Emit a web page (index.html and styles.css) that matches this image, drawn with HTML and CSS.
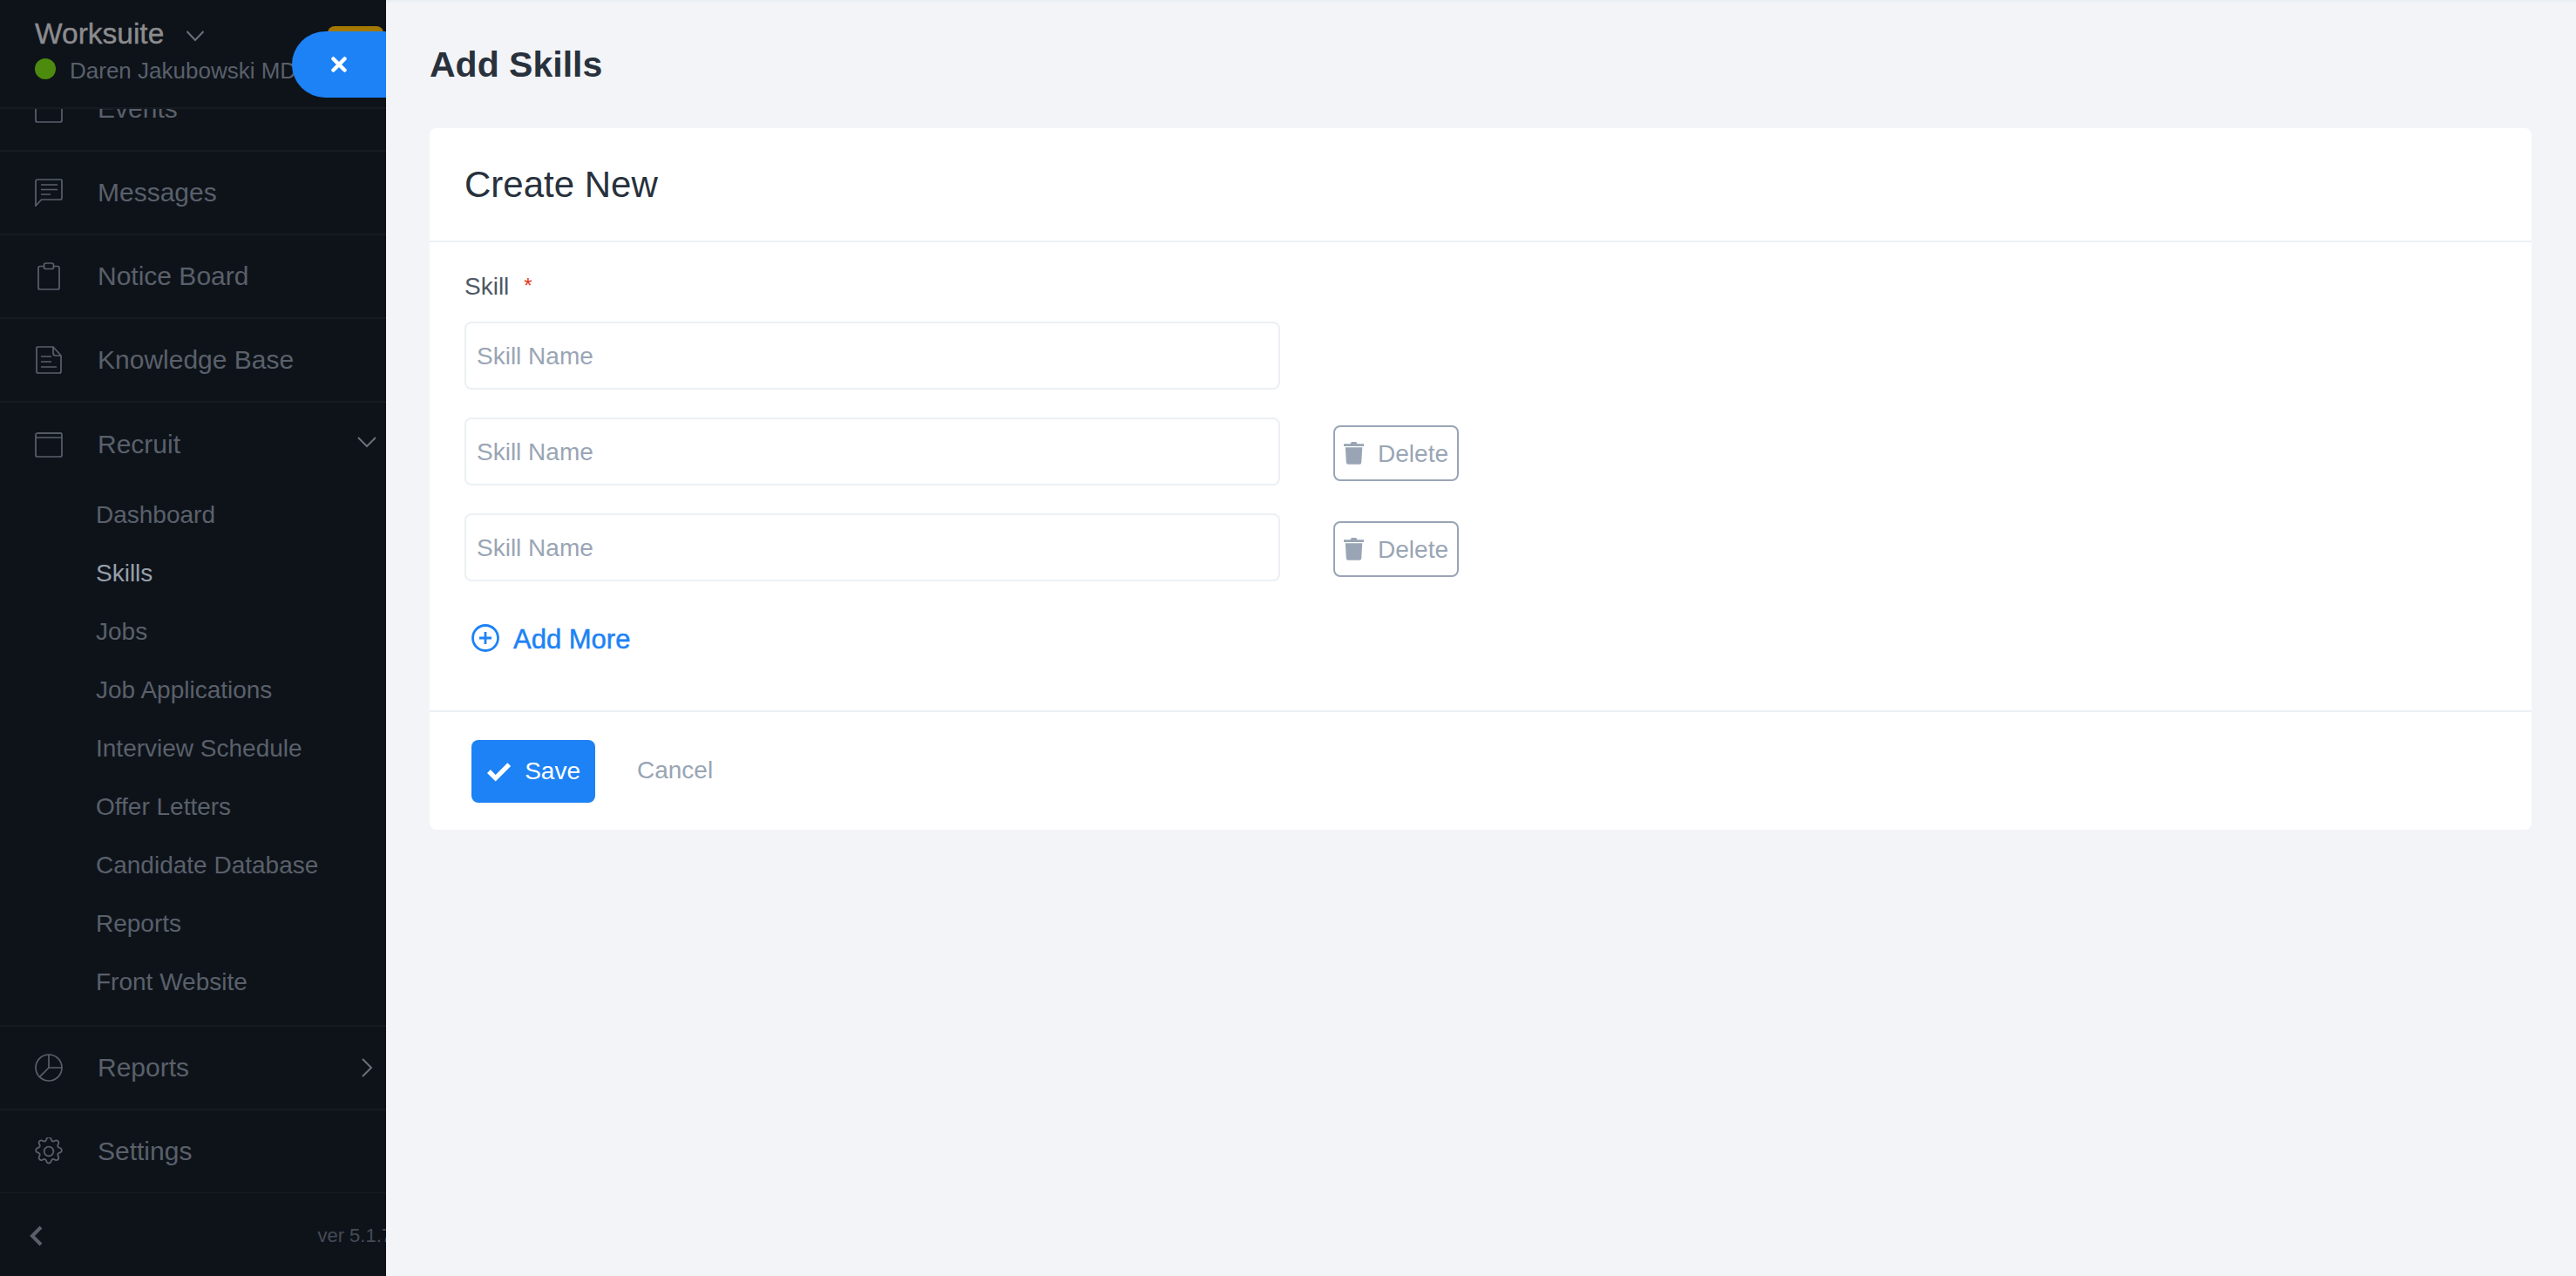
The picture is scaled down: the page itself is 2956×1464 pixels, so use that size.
FILE: index.html
```html
<!DOCTYPE html>
<html lang="en">
<head>
<meta charset="utf-8">
<title>Add Skills</title>
<link rel="stylesheet" href="styles.css">
</head>
<body>
<div class="app">
  <aside class="sidebar">
    <header class="brand">
      <div class="brand-name"><span>Worksuite</span>
        <svg class="brand-caret" viewBox="0 0 22 14"><path d="M1.500 2 11 12 20.500 2"/></svg>
      </div>
      <div class="brand-user"><i class="dot"></i><span>Daren Jakubowski MD</span></div>
    </header>
    <span class="badge"></span>
    <button class="close" aria-label="Close"><svg viewBox="0 0 18 18"><path d="M2.500 2.500 15.500 15.500M15.500 2.500 2.500 15.500"/></svg></button>
    <nav class="nav">
      <div class="nav-inner">
        <a class="row">
          <svg class="ico" viewBox="0 0 32 32"><rect x="1" y="3" width="30" height="28" rx="2"/></svg>
          <span>Events</span>
        </a>
        <a class="row">
          <svg class="ico" viewBox="0 0 32 32"><path d="M1 31V3a2 2 0 0 1 2-2h27a1 1 0 0 1 1 1v20a2 2 0 0 1-2 2H7.500Z"/><path d="M7 7h19M7 12.500h19M7 18h11"/></svg>
          <span>Messages</span>
        </a>
        <a class="row">
          <svg class="ico" viewBox="0 0 32 32"><path d="M10 4.500H6a2 2 0 0 0-2 2V29a2 2 0 0 0 2 2h20a2 2 0 0 0 2-2V6.500a2 2 0 0 0-2-2h-4"/><rect x="10.500" y="1" width="11" height="6.500" rx="2"/></svg>
          <span>Notice Board</span>
        </a>
        <a class="row">
          <svg class="ico" viewBox="0 0 32 32"><path d="M3 1h18l9 10v18a2 2 0 0 1-2 2H4a2 2 0 0 1-2-2V2a1 1 0 0 1 1-1Z"/><path d="M21 1v7a3 3 0 0 0 3 3h6M7 12h12M7 18h12M7 24h18"/></svg>
          <span>Knowledge Base</span>
        </a>
        <div class="group">
          <a class="row row-open">
            <svg class="ico" viewBox="0 0 32 32"><rect x="1" y="3" width="30" height="27" rx="2"/><path d="M1 8h30M3 3h28"/></svg>
            <span>Recruit</span>
            <svg class="caret-down" viewBox="0 0 22 14"><path d="M1 2 11 12 21 2"/></svg>
          </a>
          <ul class="sub">
            <li>Dashboard</li>
            <li class="current">Skills</li>
            <li>Jobs</li>
            <li>Job Applications</li>
            <li>Interview Schedule</li>
            <li>Offer Letters</li>
            <li>Candidate Database</li>
            <li>Reports</li>
            <li>Front Website</li>
          </ul>
        </div>
        <a class="row">
          <svg class="ico" viewBox="0 0 32 32"><circle cx="16" cy="16" r="15"/><path d="M16 1v15h15M16 16 5.500 26.700"/></svg>
          <span>Reports</span>
          <svg class="caret-right" viewBox="0 0 14 22"><path d="M2 1 12 11 2 21"/></svg>
        </a>
        <a class="row">
          <svg class="ico" viewBox="1 1 30 30"><circle cx="16" cy="16" r="5"/><path d="M13.700 2.400a2.500 2.500 0 0 1 4.600 0l.6 1.500a2 2 0 0 0 2.700 1.100l1.500-.6a2.500 2.500 0 0 1 3.300 3.300l-.6 1.500a2 2 0 0 0 1.100 2.700l1.500.6a2.500 2.500 0 0 1 0 4.600l-1.500.6a2 2 0 0 0-1.100 2.700l.6 1.500a2.500 2.500 0 0 1-3.300 3.300l-1.500-.6a2 2 0 0 0-2.700 1.100l-.6 1.500a2.500 2.500 0 0 1-4.600 0l-.6-1.500a2 2 0 0 0-2.700-1.100l-1.500.6a2.500 2.500 0 0 1-3.300-3.300l.6-1.500a2 2 0 0 0-1.100-2.700l-1.500-.6a2.500 2.500 0 0 1 0-4.600l1.500-.6a2 2 0 0 0 1.100-2.700l-.6-1.500a2.500 2.500 0 0 1 3.300-3.300l1.500.6a2 2 0 0 0 2.700-1.100Z"/></svg>
          <span>Settings</span>
        </a>
      </div>
    </nav>
    <footer class="side-foot">
      <svg class="collapse" viewBox="0 0 16 24"><path d="M14 2 4 12l10 10"/></svg>
      <span class="ver">ver 5.1.7</span>
    </footer>
  </aside>

  <main class="main">
    <h1 class="page-title">Add Skills</h1>
    <section class="card">
      <h2 class="card-title">Create New</h2>
      <div class="card-body">
        <label class="field-label">Skill <sup class="req">*</sup></label>
        <div class="skill-row"><input class="input" placeholder="Skill Name"></div>
        <div class="skill-row">
          <input class="input" placeholder="Skill Name">
          <button class="del">
            <svg viewBox="0 0 26 30"><path d="M0 3.500h8.500L10 1h6l1.500 2.500H26V6.500H0Z"/><path d="M2 8h22l-1.200 19.500a2.500 2.500 0 0 1-2.500 2.500H5.700a2.500 2.500 0 0 1-2.500-2.500Z"/></svg>
            <span>Delete</span>
          </button>
        </div>
        <div class="skill-row">
          <input class="input" placeholder="Skill Name">
          <button class="del">
            <svg viewBox="0 0 26 30"><path d="M0 3.500h8.500L10 1h6l1.500 2.500H26V6.500H0Z"/><path d="M2 8h22l-1.200 19.500a2.500 2.500 0 0 1-2.500 2.500H5.700a2.500 2.500 0 0 1-2.500-2.500Z"/></svg>
            <span>Delete</span>
          </button>
        </div>
        <a class="add-more">
          <svg viewBox="0 0 32 32"><circle cx="16" cy="16" r="14.500"/><path d="M16 9v14M9 16h14"/></svg>
          <span>Add More</span>
        </a>
      </div>
      <div class="card-foot">
        <button class="save">
          <svg viewBox="0 0 30 24"><path d="M3 12 11 20 27 4"/></svg>
          <span>Save</span>
        </button>
        <a class="cancel">Cancel</a>
      </div>
    </section>
  </main>
</div>
</body>
</html>
```

FILE: styles.css
```css
* { box-sizing: border-box; }
html, body { margin: 0; height: 100%; }
body {
  font-family: "Liberation Sans", Arial, sans-serif;
  background: #f2f4f7;
  overflow: hidden;
}
.app { display: flex; height: 1464px; }

/* Sidebar */
.sidebar {
  position: relative;
  flex: 0 0 443px;
  display: flex;
  flex-direction: column;
  background: #0e131a;
  overflow: hidden;
}
.brand {
  flex: 0 0 125px;
  padding: 20px 0 0 40px;
  border-bottom: 2px solid #161b22;
  white-space: nowrap;
  position: relative;
  z-index: 1;
  background: #0e131a;
}
.brand-name {
  display: flex;
  align-items: center;
  gap: 25px;
  font-size: 33.500px;
  line-height: 38px;
  color: #8c8c8e;
  -webkit-text-stroke: .4px #8c8c8e;
}
.brand-caret { width: 22px; height: 14px; margin-top: 3px; }
.brand-caret path, .caret-down path, .caret-right path {
  fill: none; stroke: #6c7078; stroke-width: 2;
}
.brand-user {
  display: flex;
  align-items: center;
  gap: 16px;
  margin-top: 7px;
  font-size: 26px;
  line-height: 32px;
  color: #5a606a;
}
.dot { width: 24px; height: 24px; border-radius: 50%; background: #4d8b0e; margin-top: -4px; }
.badge {
  position: absolute;
  z-index: 2;
  left: 376px; top: 30px;
  width: 64px; height: 30px;
  border-radius: 8px 8px 0 0;
  background: #a37800;
}
.close {
  position: absolute;
  z-index: 3;
  right: 0; top: 36px;
  width: 108px; height: 76px;
  padding: 0;
  border: 0;
  border-radius: 38px 0 0 38px;
  background: #1d82f5;
  display: flex;
  align-items: center;
  justify-content: center;
}
.close svg { width: 18px; height: 18px; }
.close path { fill: none; stroke: #fff; stroke-width: 4.500; stroke-linecap: round; }

.nav { flex: 1; overflow: hidden; }
.nav-inner { margin-top: -47px; }
.row, .group { display: block; border-bottom: 2px solid #161b22; }
.row {
  display: flex;
  align-items: center;
  height: 96px;
  padding-left: 40px;
  gap: 40px;
  font-size: 30px;
  color: #5a606a;
  position: relative;
}
.group .row { border-bottom: 0; height: 95px; }
.ico { flex: 0 0 32px; width: 32px; height: 32px; }
.ico * { fill: none; stroke: #5a606a; stroke-width: 1.700; }
.caret-down { position: absolute; right: 11px; top: 38px; width: 22px; height: 14px; }
.caret-right { position: absolute; right: 15px; top: 36px; width: 14px; height: 22px; }
.sub { list-style: none; margin: 0; padding: 0 0 16px 110px; }
.sub li { height: 67px; line-height: 67px; font-size: 28px; color: #5a606a; }
.sub .current { color: #98a0aa; }

.side-foot {
  flex: 0 0 95px;
  display: flex;
  align-items: center;
  justify-content: space-between;
  padding: 2px 0 0 33px;
  margin-right: -7px;
}
.collapse { width: 16px; height: 24px; }
.collapse path { fill: none; stroke: #5a606a; stroke-width: 4; }
.ver { font-size: 22px; color: #454b55; white-space: nowrap; }

/* Main */
.main {
  flex: 1;
  padding: 0 51px 0 50px;
  border-top: 2px solid #e8eef3;
}
.page-title {
  margin: 0;
  height: 145px;
  padding-top: 50px;
  font-size: 41px;
  line-height: 44px;
  font-weight: 700;
  color: #28313c;
}
.card {
  background: #fff;
  border-radius: 8px;
}
.card-title {
  margin: 0;
  height: 131px;
  padding: 0 40px;
  display: flex;
  align-items: center;
  font-size: 42px;
  font-weight: 400;
  color: #28313c;
  border-bottom: 2px solid #ebf0f4;
}
.card-body { padding: 30px 40px 0; height: 537px; }
.field-label {
  display: block;
  height: 61px;
  padding-top: 2px;
  font-size: 28px;
  line-height: 38px;
  color: #4d5865;
}
.req { color: #e8361a; font-size: 24px; line-height: 0; margin-left: 9px; vertical-align: 2px; }
.skill-row {
  display: flex;
  align-items: center;
  gap: 61px;
  margin-bottom: 32px;
}
.input {
  flex: 0 0 936px;
  width: 936px;
  height: 78px;
  padding: 2px 12px 0;
  border: 2px solid #ebf0f4;
  border-radius: 8px;
  font: 28px "Liberation Sans", Arial, sans-serif;
  background: #fff;
}
.input::placeholder { color: #99a5b5; opacity: 1; }
.del {
  display: flex;
  align-items: center;
  gap: 16px;
  width: 144px;
  height: 64px;
  margin-top: 4px;
  padding: 2px 10px 0;
  border: 2px solid #99a5b5;
  border-radius: 8px;
  background: #fff;
  color: #99a5b5;
  font: 28px "Liberation Sans", Arial, sans-serif;
}
.del svg { width: 27px; height: 31px; fill: #99a5b5; margin-top: -4px; }
.add-more {
  display: flex;
  align-items: center;
  gap: 16px;
  margin: 49px 0 0 8px;
  font-size: 31px;
  line-height: 36px;
  color: #1d82f5;
  -webkit-text-stroke: .5px #1d82f5;
}
.add-more svg { width: 32px; height: 32px; margin-top: -4px; }
.add-more circle, .add-more path { fill: none; stroke: #1d82f5; stroke-width: 2.800; }
.card-foot {
  display: flex;
  align-items: center;
  gap: 48px;
  height: 137px;
  padding: 0 48px;
  border-top: 2px solid #ebf0f4;
}
.save {
  display: flex;
  align-items: center;
  gap: 15px;
  width: 142px;
  height: 72px;
  padding: 1px 17px 0;
  border: 0;
  border-radius: 8px;
  background: #1d82f5;
  color: #fff;
  font: 28px "Liberation Sans", Arial, sans-serif;
}
.save svg { width: 32px; height: 26px; }
.save path { fill: none; stroke: #fff; stroke-width: 5.500; }
.cancel { font-size: 28px; color: #99a5b5; margin-top: -2px; }
```
